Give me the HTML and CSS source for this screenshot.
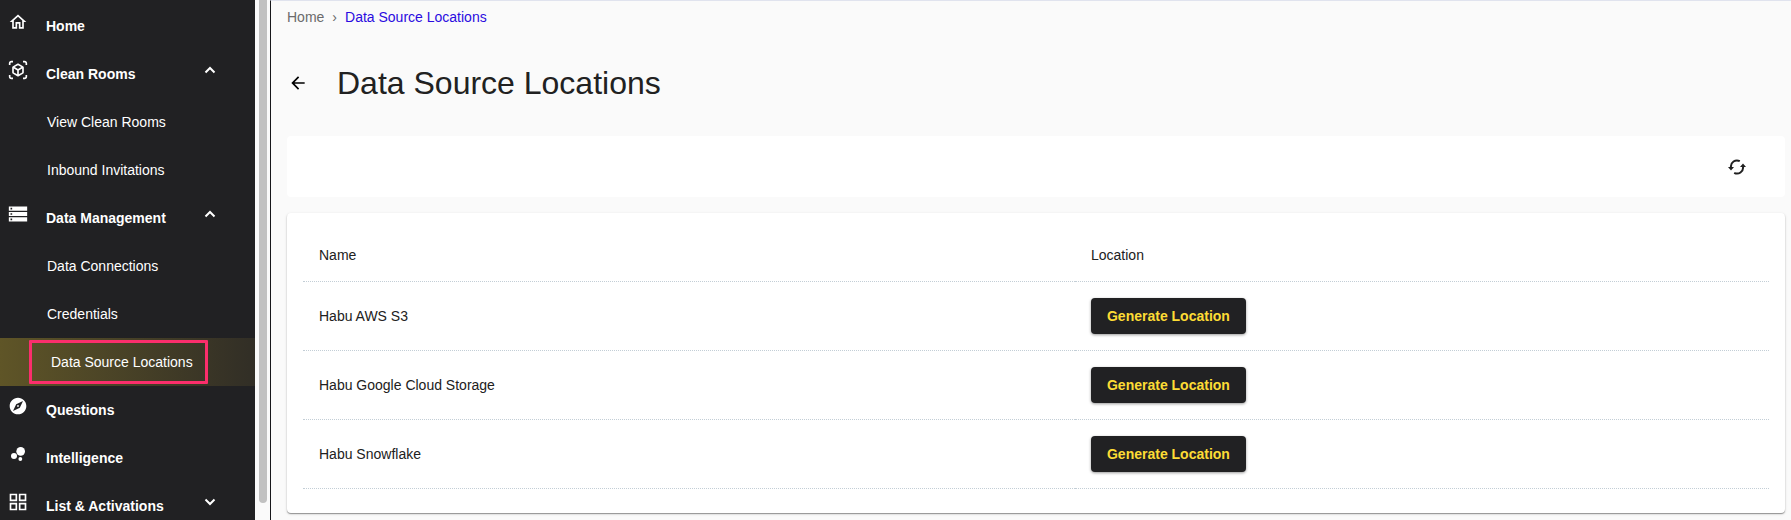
FILE: index.html
```html
<!DOCTYPE html>
<html lang="en">
<head>
<meta charset="utf-8">
<title>Data Source Locations</title>
<link rel="stylesheet" href="styles.css">
</head>
<body>
<div class="app">
  <nav class="sidebar" aria-label="Main">
    <a class="item" href="#home">
      <svg class="icon" viewBox="0 0 24 24"><path d="M12 5.69l5 4.5V18h-2v-6H9v6H7v-7.81l5-4.5M12 3L2 12h3v8h6v-6h2v6h6v-8h3L12 3z"/></svg>
      <span>Home</span>
    </a>
    <button class="item" type="button" aria-expanded="true">
      <svg class="icon" viewBox="0 0 24 24"><path fill-rule="evenodd" d="M3 4c0-.55.45-1 1-1h2V1H4C2.340 1 1 2.340 1 4v2h2V4zM3 20v-2H1v2c0 1.660 1.340 3 3 3h2v-2H4c-.55 0-1-.45-1-1zM20 1h-2v2h2c.55 0 1 .45 1 1v2h2V4c0-1.660-1.340-3-3-3zM21 20c0 .55-.45 1-1 1h-2v2h2c1.660 0 3-1.340 3-3v-2h-2v2zM19 14.870V9.130c0-.72-.38-1.380-1-1.730l-5-2.880c-.62-.36-1.380-.36-2 0L6 7.390c-.62.36-1 1.020-1 1.740v5.740c0 .72.380 1.380 1 1.730l5 2.880c.62.360 1.380.360 2 0l5-2.880c.62-.350 1-1.010 1-1.730zM11 17.170l-4-2.300v-4.630l4 2.330v4.600zM12 10.840L8.040 8.530 12 6.250l3.960 2.280L12 10.840zM17 14.870l-4 2.300v-4.600l4-2.330v4.630z"/></svg>
      <span>Clean Rooms</span>
      <svg class="chevron" viewBox="0 0 10 6"><path d="M0.500 5.500L5 1l4.500 4.500"/></svg>
    </button>
    <a class="subitem" href="#view-clean-rooms">View Clean Rooms</a>
    <a class="subitem" href="#inbound-invitations">Inbound Invitations</a>
    <button class="item" type="button" aria-expanded="true">
      <svg class="icon" viewBox="0 0 24 24"><path fill-rule="evenodd" d="M1 3h22v5H1zM3 4.500h2v2H3zM1 9.500h22v5H1zM3 11h2v2H3zM1 16h22v5H1zM3 17.500h2v2H3z"/></svg>
      <span>Data Management</span>
      <svg class="chevron" viewBox="0 0 10 6"><path d="M0.500 5.500L5 1l4.500 4.500"/></svg>
    </button>
    <a class="subitem" href="#data-connections">Data Connections</a>
    <a class="subitem" href="#credentials">Credentials</a>
    <a class="subitem active" href="#data-source-locations" aria-current="page"><span class="marker">Data Source Locations</span></a>
    <a class="item" href="#questions">
      <svg class="icon" viewBox="0 0 24 24"><path d="M12 10.900c-.61 0-1.100.49-1.100 1.100s.49 1.100 1.100 1.100c.61 0 1.100-.49 1.100-1.100s-.49-1.100-1.100-1.100zM12 2C6.480 2 2 6.480 2 12s4.480 10 10 10 10-4.480 10-10S17.520 2 12 2zm2.190 12.190L6 18l3.810-8.190L18 6l-3.810 8.190z"/></svg>
      <span>Questions</span>
    </a>
    <a class="item" href="#intelligence">
      <svg class="icon" viewBox="0 0 24 24"><circle cx="7.200" cy="14.400" r="3.600"/><circle cx="14.800" cy="18" r="2.300"/><circle cx="15.200" cy="8.800" r="5.200"/></svg>
      <span>Intelligence</span>
    </a>
    <button class="item" type="button" aria-expanded="false">
      <svg class="icon" viewBox="0 0 24 24"><path fill-rule="evenodd" d="M2 2h9v9H2zM4 4v5h5V4zM13 2h9v9h-9zM15 4v5h5V4zM2 13h9v9H2zM4 15v5h5v-5zM13 13h9v9h-9zM15 15v5h5v-5z"/></svg>
      <span>List &amp; Activations</span>
      <svg class="chevron" viewBox="0 0 10 6"><path d="M0.500 0.500L5 5l4.500-4.500"/></svg>
    </button>
  </nav>
  <div class="scroll-track"><div class="scroll-thumb"></div></div>
  <main class="main">
    <nav class="breadcrumb" aria-label="Breadcrumb">
      <a href="#home">Home</a><span class="separator">›</span><a class="current" href="#data-source-locations">Data Source Locations</a>
    </nav>
    <header class="heading">
      <button class="icon-button" type="button" aria-label="Back">
        <svg class="back" viewBox="0 0 24 24"><path d="M20 11H7.830l5.590-5.590L12 4l-8 8 8 8 1.410-1.410L7.830 13H20v-2z"/></svg>
      </button>
      <h1>Data Source Locations</h1>
    </header>
    <div class="toolbar">
      <button class="icon-button" type="button" aria-label="Refresh">
        <svg class="refresh" viewBox="0 0 18 16"><path class="arc" d="M3 8.300A6 6 0 0 1 11.800 2.200M15 7.700A6 6 0 0 1 6.200 13.800"/><path d="M0 8h6L3 11.500zM12 8h6L15 4.500z"/></svg>
      </button>
    </div>
    <section class="card">
      <table>
        <thead><tr><th class="name" scope="col">Name</th><th scope="col">Location</th></tr></thead>
        <tbody>
          <tr><td>Habu AWS S3</td><td><button class="generate" type="button">Generate Location</button></td></tr>
          <tr><td>Habu Google Cloud Storage</td><td><button class="generate" type="button">Generate Location</button></td></tr>
          <tr><td>Habu Snowflake</td><td><button class="generate" type="button">Generate Location</button></td></tr>
        </tbody>
      </table>
    </section>
  </main>
</div>
</body>
</html>
```
FILE: styles.css
```css
* {
  box-sizing: border-box;
}

body {
  margin: 0;
  background: #fafafa;
  color: #212121;
  font: 14px/20px "Liberation Sans", Arial, sans-serif;
}

a {
  color: inherit;
  text-decoration: none;
}

button {
  border: 0;
  padding: 0;
  background: none;
  color: inherit;
  font: inherit;
  cursor: pointer;
}

.app {
  display: flex;
  height: 100vh;
  overflow: hidden;
}

.sidebar {
  flex: 0 0 255px;
  padding-top: 2px;
  overflow: hidden;
  background: #212123;
  color: #fff;
}

.item {
  display: flex;
  align-items: center;
  width: 100%;
  height: 48px;
  padding: 0 40px 0 8px;
  font-weight: bold;
}

.icon {
  width: 20px;
  height: 20px;
  margin: 0 18px 8px 0;
  fill: #fff;
}

.chevron {
  width: 10px;
  height: 6px;
  margin: 0 0 8px auto;
  overflow: visible;
  fill: none;
  stroke: #fff;
  stroke-width: 2;
}

.subitem {
  display: flex;
  align-items: center;
  height: 48px;
  padding-left: 47px;
}

.active {
  padding-left: 29px;
  background: linear-gradient(90deg, #5f5527, #312e26);
}

.marker {
  padding: 9px 12px 9px 19px;
  border: 3px solid #fb2e6c;
  border-radius: 1px;
}

.scroll-track {
  flex: 0 0 15px;
  padding: 0 3px 17px 4px;
  background: #fafafa;
}

.scroll-thumb {
  height: 100%;
  border-radius: 0 0 4px 4px;
  background: #c1c1c1;
}

.main {
  flex: 1;
  min-width: 0;
  padding: 0 6px 0 16px;
  border-top: 1px solid #e0e3ee;
  border-left: 1px solid #17171a;
}

.breadcrumb {
  display: flex;
  padding-top: 6px;
  color: #6b6b6b;
}

.separator {
  margin: 0 8px;
}

.current {
  color: #2a0be0;
}

.heading {
  display: flex;
  align-items: center;
  padding: 36px 0 33px 1px;
}

.heading h1 {
  margin: 0 0 0 29px;
  font-size: 32px;
  font-weight: normal;
  line-height: 40px;
}

.icon-button {
  display: flex;
}

.back {
  width: 20px;
  height: 20px;
  fill: #000;
}

.toolbar {
  display: flex;
  align-items: center;
  justify-content: flex-end;
  height: 61px;
  margin-bottom: 16px;
  padding-right: 39px;
  border-radius: 4px;
  background: #fff;
}

.refresh {
  width: 18px;
  height: 16px;
  fill: #212121;
}

.arc {
  fill: none;
  stroke: #212121;
  stroke-width: 2;
}

.card {
  padding: 16px 16px 24px;
  border-radius: 4px;
  background: #fff;
  box-shadow: 0 1px 1px rgba(0, 0, 0, 0.35), 0 1px 3px rgba(0, 0, 0, 0.15);
}

table {
  width: 100%;
  border-spacing: 0;
  table-layout: fixed;
}

th,
td {
  padding: 16px;
  border-bottom: 1px dotted #c3ced6;
  text-align: left;
  font-weight: normal;
}

.name {
  width: 52.66%;
}

.generate {
  display: block;
  padding: 8px 16px;
  border-radius: 4px;
  background: #212123;
  box-shadow: 0 1px 3px rgba(0, 0, 0, 0.4);
  color: #fddc35;
  font-weight: bold;
}
```
